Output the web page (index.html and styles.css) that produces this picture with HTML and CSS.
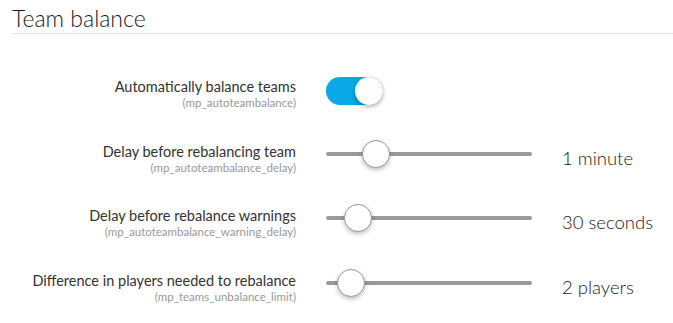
FILE: index.html
```html
<!DOCTYPE html>
<html lang="en">
<head>
    <meta charset="UTF-8">
    <meta name="viewport" content="width=device-width, initial-scale=1.0">
    <title>Team balance</title>
    <link rel="stylesheet" href="styles.css">
</head>
<body>
    <div class="section">
        <h2 class="section-title">Team balance</h2>
        <div class="settings">
            <div class="setting">
                <div class="setting-label">
                    <div class="name">Automatically balance teams</div>
                    <div class="cvar">(mp_autoteambalance)</div>
                </div>
                <label class="switch">
                    <input type="checkbox" checked>
                    <span class="switch-track"></span>
                </label>
                <div class="value"></div>
            </div>
            <div class="setting">
                <div class="setting-label">
                    <div class="name">Delay before rebalancing team</div>
                    <div class="cvar">(mp_autoteambalance_delay)</div>
                </div>
                <input type="range" class="slider" min="0" max="100" value="20">
                <div class="value">1 minute</div>
            </div>
            <div class="setting">
                <div class="setting-label">
                    <div class="name">Delay before rebalance warnings</div>
                    <div class="cvar">(mp_autoteambalance_warning_delay)</div>
                </div>
                <input type="range" class="slider" min="0" max="100" value="10">
                <div class="value">30 seconds</div>
            </div>
            <div class="setting">
                <div class="setting-label">
                    <div class="name">Difference in players needed to rebalance</div>
                    <div class="cvar">(mp_teams_unbalance_limit)</div>
                </div>
                <input type="range" class="slider" min="0" max="100" value="6">
                <div class="value">2 players</div>
            </div>
        </div>
    </div>
</body>
</html>
```

FILE: styles.css
```css
body {
    font-family: Lato, "Open Sans", Arial, sans-serif;
    background-color: #fff;
    color: #333;
    margin: 0;
    padding: 0;
}
.section {
    padding-left: 12px;
}
.section-title {
    font-size: 23px;
    font-weight: 300;
    color: #1a1a1a;
    line-height: 26px;
    margin: 0;
    padding-top: 5px;
    padding-bottom: 2px;
    border-bottom: 1px solid #e5e5e5;
}
.settings {
    padding-top: 44px;
    padding-right: 12px;
}
.setting {
    display: grid;
    grid-template-columns: 284px 206px 1fr;
    column-gap: 30px;
    align-items: start;
    height: 64.5px;
}
.setting-label {
    text-align: right;
}
.name {
    font-size: 14.5px;
    line-height: 18px;
}
.cvar {
    font-size: 11.5px;
    line-height: 14px;
    color: #999;
}
.value {
    font-size: 18.5px;
    font-weight: 300;
    color: #1a1a1a;
    line-height: 28px;
    margin-top: 1px;
}

/* toggle */
.switch {
    display: block;
    position: relative;
    width: 57px;
    height: 28px;
    margin-top: -1px;
}
.switch input {
    display: none;
}
.switch-track {
    position: absolute;
    inset: 0;
    border-radius: 14px;
    background-color: #ccc;
    cursor: pointer;
}
.switch-track::after {
    content: "";
    position: absolute;
    top: 0;
    left: 0;
    width: 28px;
    height: 28px;
    border-radius: 50%;
    background-color: #fff;
    box-shadow: 0 2px 4px rgba(0, 0, 0, 0.3);
}
.switch input:checked + .switch-track {
    background-color: #08a9e6;
}
.switch input:checked + .switch-track::after {
    left: 29px;
}

/* sliders */
.slider {
    -webkit-appearance: none;
    appearance: none;
    width: 206px;
    height: 28px;
    margin: -3px 0 0 0;
    background: transparent;
}
.slider::-webkit-slider-runnable-track {
    height: 4px;
    border-radius: 2px;
    background-color: #999;
}
.slider::-webkit-slider-thumb {
    -webkit-appearance: none;
    width: 28px;
    height: 28px;
    margin-top: -12px;
    border-radius: 50%;
    border: 1px solid #999;
    background-color: #fff;
    box-sizing: border-box;
    box-shadow: 0 2px 4px rgba(0, 0, 0, 0.25);
}
```
